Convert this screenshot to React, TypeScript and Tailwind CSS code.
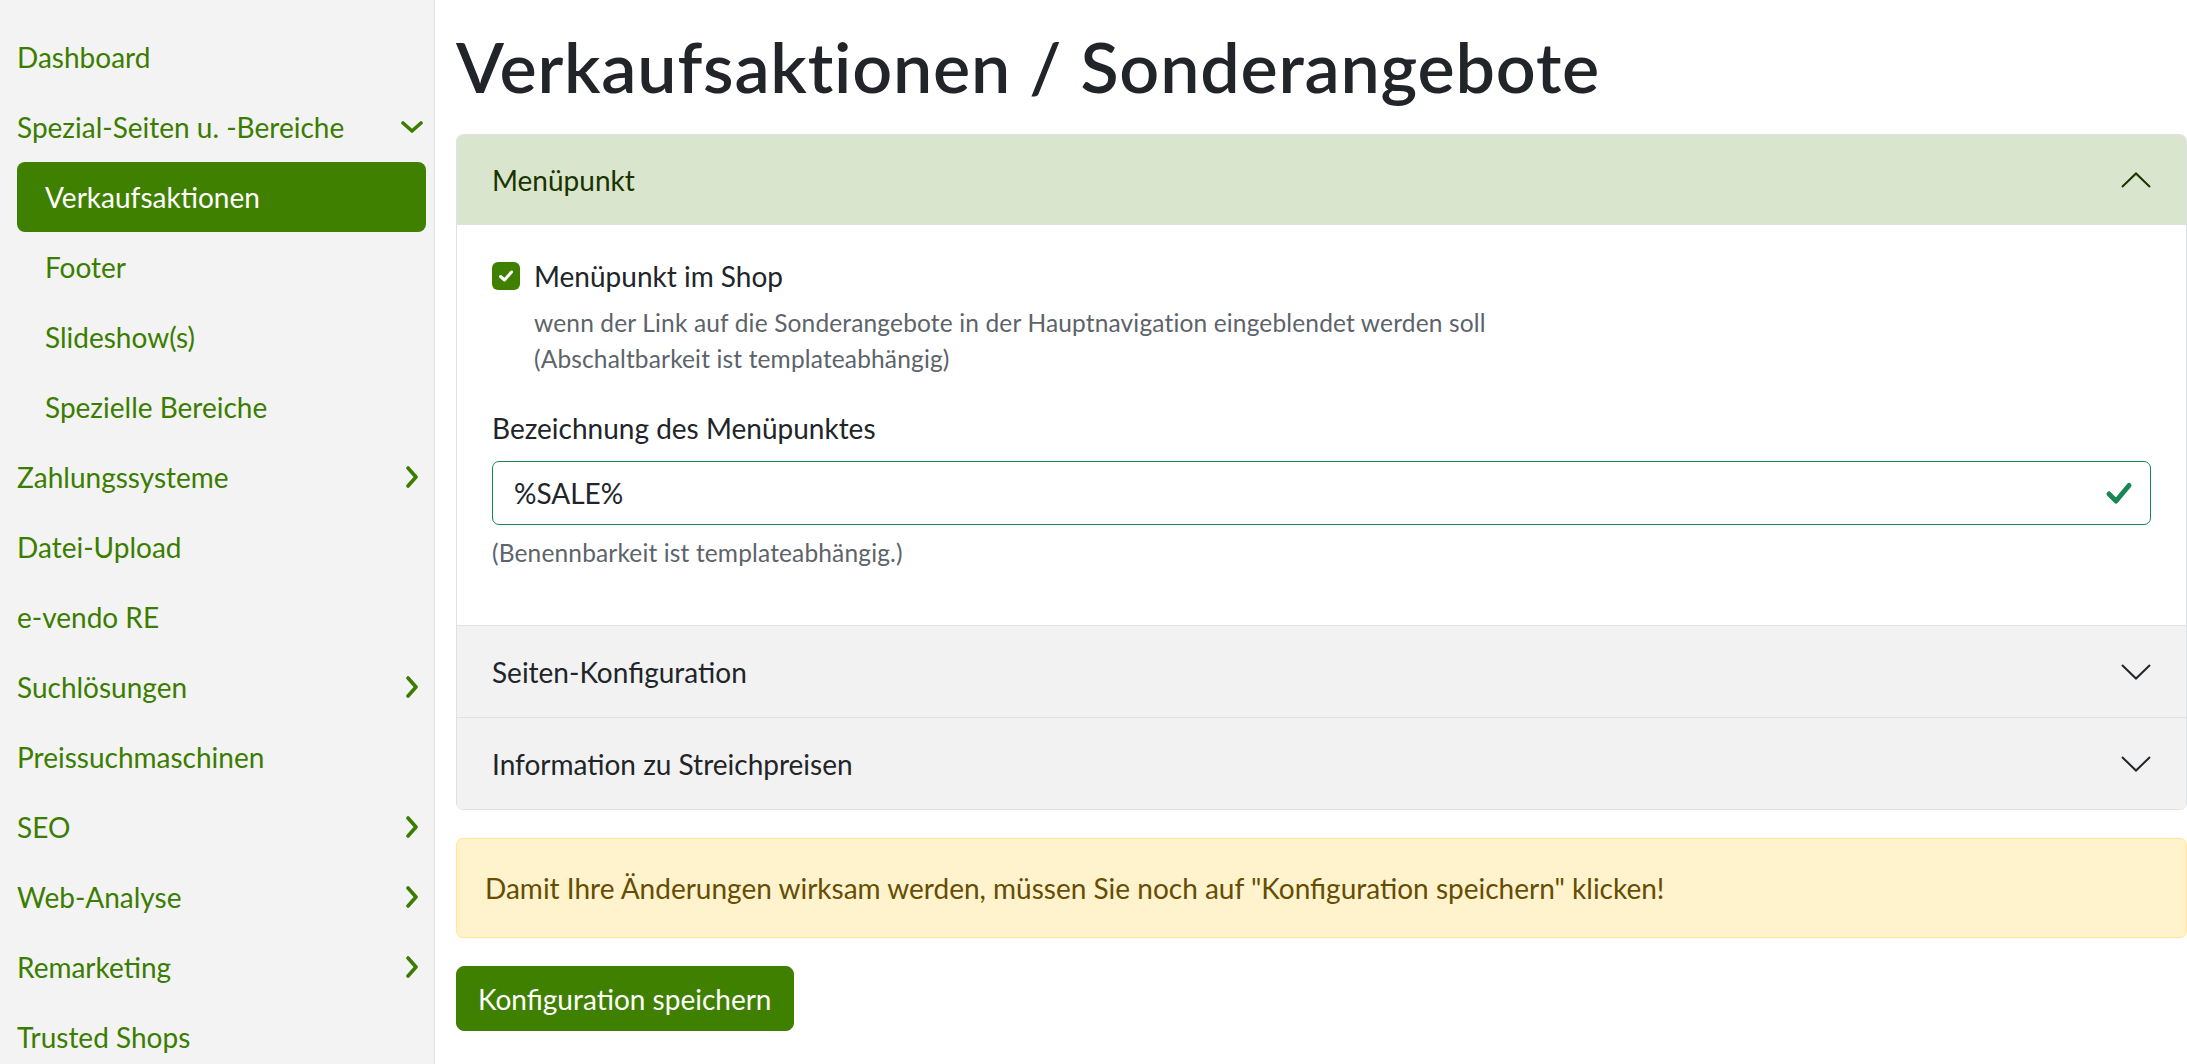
import React from 'react';

type NavItem = {
  label: string;
  sub?: boolean;
  active?: boolean;
  chevron?: 'down' | 'right';
};

const navItems: NavItem[] = [
  { label: 'Dashboard' },
  { label: 'Spezial-Seiten u. -Bereiche', chevron: 'down' },
  { label: 'Verkaufsaktionen', sub: true, active: true },
  { label: 'Footer', sub: true },
  { label: 'Slideshow(s)', sub: true },
  { label: 'Spezielle Bereiche', sub: true },
  { label: 'Zahlungssysteme', chevron: 'right' },
  { label: 'Datei-Upload' },
  { label: 'e-vendo RE' },
  { label: 'Suchlösungen', chevron: 'right' },
  { label: 'Preissuchmaschinen' },
  { label: 'SEO', chevron: 'right' },
  { label: 'Web-Analyse', chevron: 'right' },
  { label: 'Remarketing', chevron: 'right' },
  { label: 'Trusted Shops' },
];

const NavChevron = ({ dir }: { dir: 'down' | 'right' }) =>
  dir === 'down' ? (
    <svg width="22" height="12" viewBox="0 0 22 12" fill="none">
      <polyline points="2,2 11,10 20,2" stroke="currentColor" strokeWidth="3.6" strokeLinecap="round" strokeLinejoin="round" />
    </svg>
  ) : (
    <svg width="14" height="22" viewBox="0 0 14 22" fill="none">
      <polyline points="3,2 11,11 3,20" stroke="currentColor" strokeWidth="3.6" strokeLinecap="round" strokeLinejoin="round" />
    </svg>
  );

const AccordionChevron = ({ up }: { up?: boolean }) => (
  <svg width="30" height="16" viewBox="0 0 30 16" fill="none">
    <polyline
      points={up ? '1,15 15,1.5 29,15' : '1,1 15,14.5 29,1'}
      stroke="currentColor"
      strokeWidth="2"
    />
  </svg>
);

const Sidebar = () => (
  <aside className="w-[435px] shrink-0 border-r border-[#dee2e6] bg-[#f3f3f3] pt-[22px] pl-[17px] pr-[8px]">
    {navItems.map((item) => {
      if (item.sub) {
        return (
          <div
            key={item.label}
            className={`flex h-[70px] items-center rounded-[8px] pl-[28px] ${
              item.active ? 'bg-[#408000] text-white' : 'text-[#3b7d00]'
            }`}
          >
            {item.label}
          </div>
        );
      }
      return (
        <div key={item.label} className="flex h-[70px] items-center justify-between text-[#3b7d00]">
          <span>{item.label}</span>
          {item.chevron && (
            <span className="mr-[2px] flex w-[24px] justify-center">
              <NavChevron dir={item.chevron} />
            </span>
          )}
        </div>
      );
    })}
  </aside>
);

export default function App() {
  return (
    <div className="flex h-[1064px] overflow-hidden bg-white font-['Lato','Open_Sans',sans-serif] text-[28px] leading-[42px] text-[#212529]">
      <Sidebar />

      <main className="min-w-0 flex-1 pl-[21px]">
        <h1 className="mt-[24px] mb-[26px] text-[70px] leading-[84px] font-semibold tracking-[0.8px] text-[#212529]">
          Verkaufsaktionen / Sonderangebote
        </h1>

        {/* accordion */}
        <div className="overflow-hidden rounded-[7px] border border-[#dee2e6]">
          <div className="flex h-[90px] items-center justify-between border-b border-[#dee2e6] bg-[#d9e5cc] px-[35px] text-[#1a3300]">
            <span>Menüpunkt</span>
            <AccordionChevron up />
          </div>

          <div className="px-[35px] pt-[30px] pb-[54px]">
            <div className="flex items-center">
              <span className="flex h-[28px] w-[28px] items-center justify-center rounded-[6px] bg-[#408000]">
                <svg width="16" height="14" viewBox="0 0 16 14" fill="none">
                  <polyline points="2.5,7.5 6.5,11 13.5,3" stroke="white" strokeWidth="3" strokeLinecap="round" strokeLinejoin="round" />
                </svg>
              </span>
              <span className="ml-[14px]">Menüpunkt im Shop</span>
            </div>
            <div className="mt-[8px] pl-[42px] text-[24.5px] leading-[36px] tracking-[0.15px] text-[#5c636a]">
              <div>wenn der Link auf die Sonderangebote in der Hauptnavigation eingeblendet werden soll</div>
              <div>(Abschaltbarkeit ist templateabhängig)</div>
            </div>

            <div className="mt-[30px]">Bezeichnung des Menüpunktes</div>
            <div className="mt-[12px] flex h-[64px] items-center justify-between rounded-[7px] border border-[#198754] pl-[21px] pr-[17px]">
              <span>%SALE%</span>
              <svg width="28" height="24" viewBox="0 0 28 24" fill="none">
                <polyline points="4,13 11,20 24,4.5" stroke="#198754" strokeWidth="5" strokeLinecap="round" strokeLinejoin="round" />
              </svg>
            </div>
            <div className="mt-[10px] text-[24.5px] leading-[36px] tracking-[0.15px] text-[#5c636a]">
              (Benennbarkeit ist templateabhängig.)
            </div>
          </div>

          <div className="flex h-[92px] items-center justify-between border-t border-[#dee2e6] bg-[#f2f2f2] px-[35px]">
            <span>Seiten-Konfiguration</span>
            <AccordionChevron />
          </div>
          <div className="flex h-[92px] items-center justify-between border-t border-[#dee2e6] bg-[#f2f2f2] px-[35px]">
            <span>Information zu Streichpreisen</span>
            <AccordionChevron />
          </div>
        </div>

        <div className="mt-[28px] rounded-[7px] border border-[#ffe69c] bg-[#fff3cd] px-[28px] py-[28px] text-[#664d03]">
          Damit Ihre Änderungen wirksam werden, müssen Sie noch auf "Konfiguration speichern" klicken!
        </div>

        <button className="mt-[28px] rounded-[8px] border border-[#408000] bg-[#408000] px-[21px] py-[10.5px] text-white">
          Konfiguration speichern
        </button>
      </main>
    </div>
  );
}
